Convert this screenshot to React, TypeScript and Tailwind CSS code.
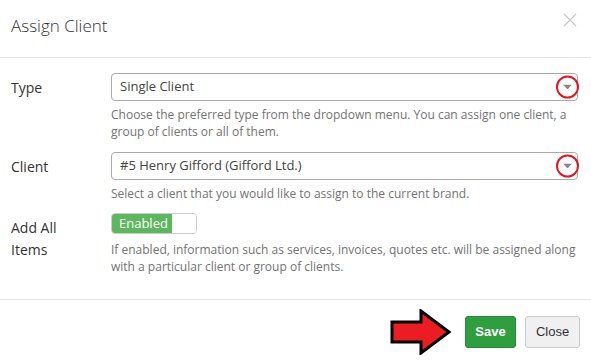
import React from 'react';

const Caret: React.FC = () => (
  <div className="absolute right-[-2px] top-1/2 -translate-y-1/2 w-[23px] h-[23px] rounded-full border-2 border-[#e8141c] flex items-center justify-center">
    <svg width="9" height="5" viewBox="0 0 9 5">
      <path d="M0 0 L9 0 L4.5 5 Z" fill="#888" />
    </svg>
  </div>
);

const SelectBox: React.FC<{value: string}> = ({value}) => (
  <div className="relative h-[28px] w-full border border-[#aaa] rounded-[4px] bg-white flex items-center pl-[8px] text-[13px] text-[#444]">
    {value}
    <Caret />
  </div>
);

const Help: React.FC<{children: React.ReactNode; top?: string}> = ({children, top = 'mt-[5px]'}) => (
  <p className={`${top} mr-[-12px] whitespace-nowrap text-[12px] leading-[17px] text-[#737373]`}>
    {children}
  </p>
);

const App: React.FC = () => {
  return (
    <div
      className="w-[591px] h-[360px] bg-white text-[#333] overflow-hidden"
      style={{fontFamily: '"Open Sans", sans-serif'}}>
      <header className="h-[58px] border-b border-[#e5e5e5] flex items-center justify-between pl-[11px] pr-[14px]">
        <h1 className="text-[17px] font-light text-[#333] -mt-[6px]">Assign Client</h1>
        <svg width="14" height="14" viewBox="0 0 14 14" className="-mt-[18px]">
          <path d="M1 1 L13 13 M13 1 L1 13" stroke="#c8c8c8" strokeWidth="1.3" />
        </svg>
      </header>

      <main className="pl-[11px] pr-[13px] pt-[15px] h-[242px] border-b border-[#e5e5e5]">
        <div className="flex">
          <div className="w-[100px] text-[14px] h-[28px] flex items-center">Type</div>
          <div className="flex-1">
            <SelectBox value="Single Client" />
            <Help>
              Choose the preferred type from the dropdown menu. You can assign one client, a
              <br />
              group of clients or all of them.
            </Help>
          </div>
        </div>

        <div className="flex mt-[12px]">
          <div className="w-[100px] text-[14px] h-[28px] flex items-center">Client</div>
          <div className="flex-1">
            <SelectBox value="#5 Henry Gifford (Gifford Ltd.)" />
            <Help>Select a client that you would like to assign to the current brand.</Help>
          </div>
        </div>

        <div className="flex mt-[11px]">
          <div className="w-[100px] text-[14px] leading-[22px] pt-[4px]">
            Add All
            <br />
            Items
          </div>
          <div className="flex-1">
            <div className="flex w-[86px] h-[21px] border border-[#ccc] rounded-[4px] overflow-hidden">
              <div className="w-[60px] bg-[#5cb85c] text-white text-[13px] flex items-center pl-[7px]">
                Enabled
              </div>
              <div className="flex-1 bg-white" />
            </div>
            <Help top="mt-[7px]">
              If enabled, information such as services, invoices, quotes etc. will be assigned along
              <br />
              with a particular client or group of clients.
            </Help>
          </div>
        </div>
      </main>

      <footer className="flex items-center justify-end pr-[11px] pt-[9px]">
        <svg width="62" height="46" viewBox="0 0 62 46" className="mr-[13px]">
          <path
            d="M2 13 L31 13 L31 2 L59 23 L31 44 L31 33 L2 33 Z"
            fill="#ec1c24"
            stroke="#000"
            strokeWidth="3"
            strokeLinejoin="miter"
          />
        </svg>
        <button
          className="h-[32px] w-[51px] rounded-[3px] bg-[#2e9e3f] border border-[#27893a] text-white text-[13px] font-bold"
          style={{fontFamily: '"Liberation Sans", Arial, sans-serif'}}>
          Save
        </button>
        <button
          className="ml-[9px] h-[32px] w-[55px] rounded-[3px] bg-[#f0f0f0] border border-[#ccc] text-[#333] text-[13px]"
          style={{fontFamily: '"Liberation Sans", Arial, sans-serif'}}>
          Close
        </button>
      </footer>
    </div>
  );
};

export default App;
